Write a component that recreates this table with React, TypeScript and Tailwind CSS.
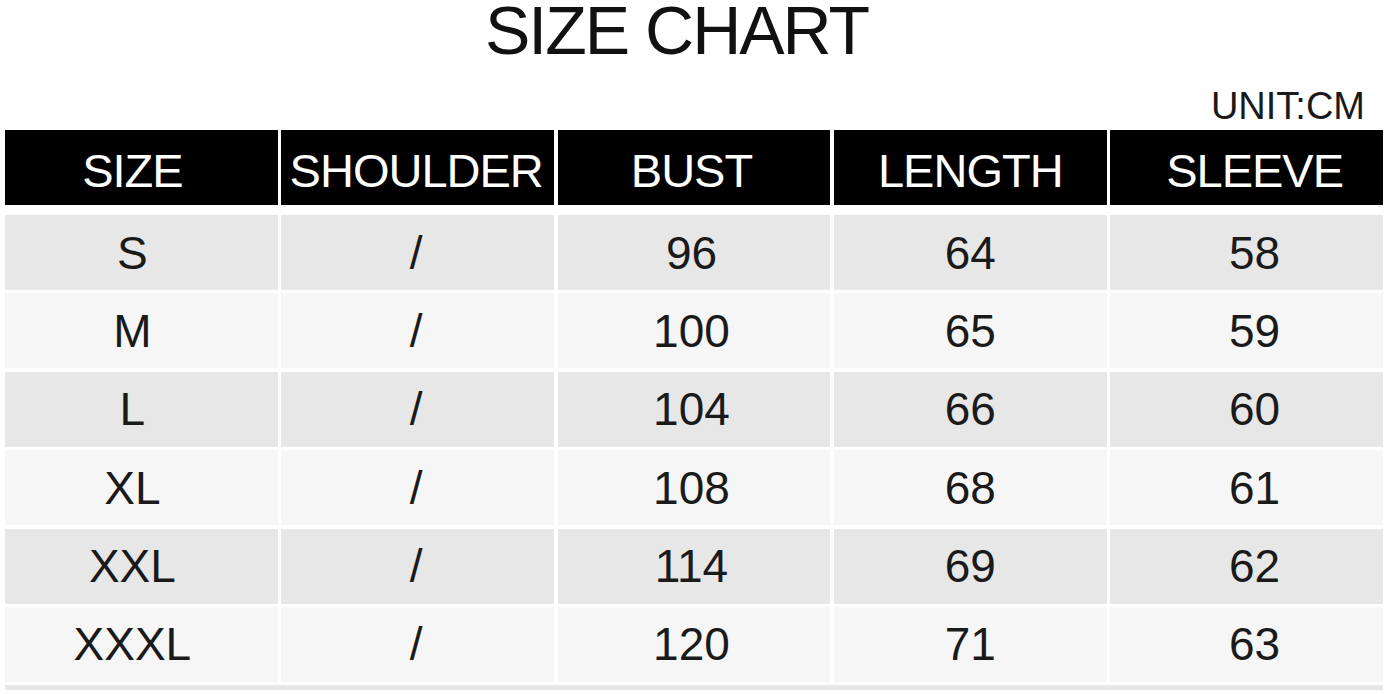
const HEADERS = ["SIZE", "SHOULDER", "BUST", "LENGTH", "SLEEVE"];

const ROWS: string[][] = [
  ["S", "/", "96", "64", "58"],
  ["M", "/", "100", "65", "59"],
  ["L", "/", "104", "66", "60"],
  ["XL", "/", "108", "68", "61"],
  ["XXL", "/", "114", "69", "62"],
  ["XXXL", "/", "120", "71", "63"],
];

// small nudges so text sits where the chart has it
const CELL_PAD = ["pr-[18px]", "pr-[3px]", "pr-[5px]", "", "pl-[16px]"];

export default function App() {
  return (
    <div className="w-[1388px] h-[694px] overflow-hidden bg-white font-['Liberation_Sans',Arial,sans-serif]">
      <div className="h-[60px] pr-[35px] text-center text-[68px] leading-[60px] tracking-[-2px] text-[#111]">
        SIZE CHART
      </div>
      <div className="mt-[27px] h-[38px] pr-[23px] text-right text-[38px] leading-none text-[#1a1a1a]">
        UNIT:CM
      </div>

      <div className="mt-[5px] ml-[5px] w-[1378px]">
        <div className="grid h-[75px] grid-cols-5 gap-x-[3.5px]">
          {HEADERS.map((h, i) => (
            <div
              key={h}
              className={`flex items-center justify-center bg-black pt-[5px] text-[47px] leading-none tracking-[-1px] text-white ${CELL_PAD[i]}`}
            >
              {h}
            </div>
          ))}
        </div>

        <div className="mt-[10px] flex flex-col gap-y-[3.4px]">
          {ROWS.map((row, r) => (
            <div key={row[0]} className="grid h-[75px] grid-cols-5 gap-x-[3.5px]">
              {row.map((v, i) => (
                <div
                  key={i}
                  className={`flex items-center justify-center text-[46px] leading-none text-[#1a1a1a] ${
                    r % 2 === 0 ? "bg-[#e7e7e7]" : "bg-[#f6f6f6]"
                  } ${CELL_PAD[i]}`}
                >
                  {v}
                </div>
              ))}
            </div>
          ))}
        </div>

        <div className="mt-[3px] h-[5px] bg-[#e7e7e7]" />
      </div>
    </div>
  );
}
